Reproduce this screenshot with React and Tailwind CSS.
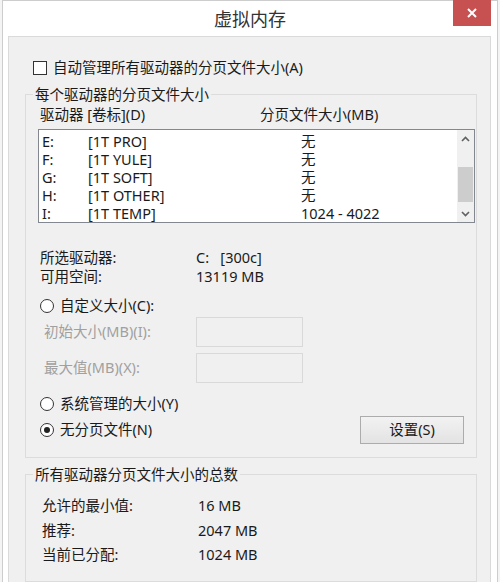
import React from "react";

const font = { fontFamily: '"Noto Sans", "Noto Sans CJK SC", sans-serif' };

function Radio({ checked, label }) {
  return (
    <div className="flex items-center">
      <span className="w-[14px] h-[14px] rounded-full border border-[#333] bg-white flex items-center justify-center ml-[2px]">
        {checked && <span className="w-[6px] h-[6px] rounded-full bg-[#222]" />}
      </span>
      <span className="ml-[6px]">{label}</span>
    </div>
  );
}

function Chevron({ up }) {
  return (
    <svg width="9" height="6" viewBox="0 0 9 6">
      <path
        d={up ? "M1 5 L4.5 1.5 L8 5" : "M1 1 L4.5 4.5 L8 1"}
        fill="none"
        stroke="#606060"
        strokeWidth="1.6"
      />
    </svg>
  );
}

const rows = [
  ["E:", "[1T PRO]", "无"],
  ["F:", "[1T YULE]", "无"],
  ["G:", "[1T SOFT]", "无"],
  ["H:", "[1T OTHER]", "无"],
  ["I:", "[1T TEMP]", "1024 - 4022"],
];

export default function App() {
  return (
    <div
      className="w-[500px] h-[582px] overflow-hidden bg-[#f4f4f4] px-[2px] text-[14.5px] text-[#1a1a1a]"
      style={font}
    >
      <div className="relative h-full border-x border-t border-[#cdcdcd] bg-white">
        <div className="h-[35px] flex items-center justify-center">
          <span className="text-[18px] text-[#333] mt-[2px]">虚拟内存</span>
        </div>
        <div className="absolute top-[-1px] right-[6px] w-[38px] h-[26px] bg-[#c75050] flex items-center justify-center">
          <svg width="10" height="10" viewBox="0 0 10 10">
            <path d="M1 1 L9 9 M9 1 L1 9" stroke="#fff" strokeWidth="2" />
          </svg>
        </div>
        <div className="ml-[5px] w-[483px] h-[600px] border border-[#dadada] bg-[#f0f0f0]">
          <div className="mt-[21px] h-[20px] flex items-center pl-[24px]">
            <span className="w-[14px] h-[14px] border border-[#333] bg-white" />
            <span className="ml-[6px]">自动管理所有驱动器的分页文件大小(A)</span>
          </div>

          <fieldset className="mt-[6px] ml-[16px] w-[452px] border border-[#dcdcdc]">
            <legend className="ml-[7px] px-[2px] leading-[20px]">每个驱动器的分页文件大小</legend>
            <div className="pl-[12px] pb-[13px]">
              <div className="mt-[1px] h-[20px] flex items-center">
                <span className="ml-[2px] w-[220px]">驱动器 [卷标](D)</span>
                <span>分页文件大小(MB)</span>
              </div>
              <div className="mt-[4px] w-[437px] h-[94px] border border-[#828790] bg-white flex">
                <div className="flex-1 pt-[2px]">
                  {rows.map((r) => (
                    <div key={r[0]} className="h-[18px] flex items-center leading-[18px]">
                      <span className="ml-[3px] w-[46px] leading-[18px]">{r[0]}</span>
                      <span className="w-[213px] leading-[18px]">{r[1]}</span>
                      <span className="leading-[18px]">{r[2]}</span>
                    </div>
                  ))}
                </div>
                <div className="w-[17px] h-full bg-[#f0f0f0] flex flex-col">
                  <div className="h-[17px] flex items-center justify-center">
                    <Chevron up />
                  </div>
                  <div className="mt-[20px] mx-[1px] h-[35px] bg-[#cdcdcd]" />
                  <div className="flex-1" />
                  <div className="h-[17px] flex items-center justify-center">
                    <Chevron />
                  </div>
                </div>
              </div>

              <div className="mt-[25px] h-[19px] flex items-center">
                <span className="ml-[2px] w-[156px]">所选驱动器:</span>
                <span>C:&nbsp;&nbsp;&nbsp;[300c]</span>
              </div>
              <div className="h-[19px] flex items-center">
                <span className="ml-[2px] w-[156px]">可用空间:</span>
                <span>13119 MB</span>
              </div>

              <div className="mt-[10px] h-[20px] flex items-center">
                <Radio label="自定义大小(C):" />
              </div>
              <div className="h-[31px] flex items-center">
                <span className="ml-[6px] w-[152px] text-[#a0a0a0]">初始大小(MB)(I):</span>
                <span className="w-[107px] h-[30px] border border-[#d9d9d9] bg-[#f0f0f0]" />
              </div>
              <div className="mt-[5px] h-[31px] flex items-center">
                <span className="ml-[6px] w-[152px] text-[#a0a0a0]">最大值(MB)(X):</span>
                <span className="w-[107px] h-[30px] border border-[#d9d9d9] bg-[#f0f0f0]" />
              </div>

              <div className="mt-[11px] h-[20px] flex items-center">
                <Radio label="系统管理的大小(Y)" />
              </div>
              <div className="mt-[2px] h-[28px] flex items-center">
                <Radio checked label="无分页文件(N)" />
                <div className="ml-auto mr-[12px] w-[104px] h-[28px] border border-[#acacac] bg-gradient-to-b from-[#f2f2f2] to-[#e3e3e3] flex items-center justify-center">
                  设置(S)
                </div>
              </div>
            </div>
          </fieldset>

          <fieldset className="mt-[6px] ml-[16px] w-[452px] border border-[#dcdcdc]">
            <legend className="ml-[7px] px-[2px] leading-[20px]">所有驱动器分页文件大小的总数</legend>
            <div className="pl-[16px] pt-[10px] pb-[13px]">
              {[
                ["允许的最小值:", "16 MB"],
                ["推荐:", "2047 MB"],
                ["当前已分配:", "1024 MB"],
              ].map((r) => (
                <div key={r[0]} className="h-[24.5px] flex items-center">
                  <span className="w-[156px]">{r[0]}</span>
                  <span>{r[1]}</span>
                </div>
              ))}
            </div>
          </fieldset>
        </div>
      </div>
    </div>
  );
}
